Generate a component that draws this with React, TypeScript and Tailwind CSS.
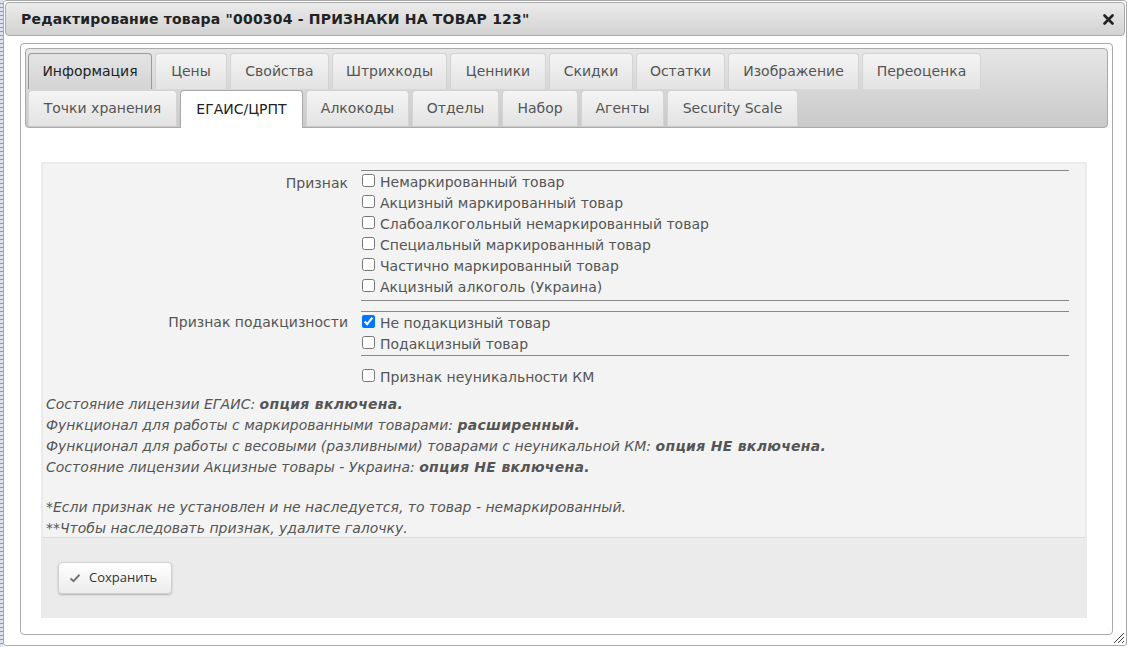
import React from "react";

const row1: [string, number][] = [
  ["Информация", 124],
  ["Цены", 72],
  ["Свойства", 99],
  ["Штрихкоды", 115],
  ["Ценники", 96],
  ["Скидки", 84],
  ["Остатки", 89],
  ["Изображение", 131],
  ["Переоценка", 119],
];
const row2: [string, number][] = [
  ["Точки хранения", 149],
  ["ЕГАИС/ЦРПТ", 123],
  ["Алкокоды", 103],
  ["Отделы", 87],
  ["Набор", 76],
  ["Агенты", 83],
  ["Security Scale", 131],
];

function Tab({ label, w, active, hover }: { label: string; w: number; active?: boolean; hover?: boolean }) {
  if (active) {
    return (
      <div
        className="relative z-10 mr-[3px] flex h-[38px] shrink-0 items-center justify-center rounded-t-[4px] border border-b-0 border-[#aaaaaa] bg-white text-[#222]"
        style={{ width: w }}
      >
        {label}
      </div>
    );
  }
  if (hover) {
    return (
      <div
        className="mr-[3px] flex h-[36px] shrink-0 items-center justify-center rounded-t-[4px] border border-b-0 border-[#9a9a9a] bg-gradient-to-b from-[#e4e4e4] to-[#d4d4d4] text-[#222]"
        style={{ width: w }}
      >
        {label}
      </div>
    );
  }
  return (
    <div
      className="mr-[3px] flex h-[36px] shrink-0 items-center justify-center rounded-t-[4px] border border-b-0 border-[#d3d3d3] bg-gradient-to-b from-[#f4f4f4] to-[#e3e3e3] text-[#555]"
      style={{ width: w }}
    >
      {label}
    </div>
  );
}

function Check({ label, checked }: { label: string; checked?: boolean }) {
  return (
    <label className="flex h-[21px] items-center">
      <input type="checkbox" defaultChecked={checked} className="m-0 ml-[1px] h-[13px] w-[13px] -translate-y-[2px] accent-[#0075ff]" />
      <span className="ml-[5px]">{label}</span>
    </label>
  );
}

export default function App() {
  return (
    <div
      className="flex h-[647px] w-[1128px] overflow-hidden bg-white text-[14px] text-[#555]"
      style={{ fontFamily: '"DejaVu Sans", Verdana, sans-serif' }}
    >
      <div className="w-[3px] shrink-0 bg-[repeating-linear-gradient(180deg,#d9e2ef_0px,#d9e2ef_3px,#7ea0d0_3px,#7ea0d0_4px)]" />
      <div className="relative flex h-[646px] w-[1124px] flex-col rounded-[3px] border border-[#aaaaaa] bg-white p-[1px]">
        {/* Title bar */}
        <div className="flex h-[34px] shrink-0 items-center justify-between rounded-[4px] border border-[#aaaaaa] bg-gradient-to-b from-[#ebebeb] to-[#d2d2d2] pl-[15px] pr-[10px]">
          <span className="text-[14px] font-bold tracking-[0.2px] text-[#222]">Редактирование товара "000304 - ПРИЗНАКИ НА ТОВАР 123"</span>
          <svg width="11" height="11" viewBox="0 0 11 11">
            <path d="M1.5 1.5 L9.5 9.5 M9.5 1.5 L1.5 9.5" stroke="#222" strokeWidth="2.6" strokeLinecap="round" />
          </svg>
        </div>

        {/* Content */}
        <div className="ml-[15px] mr-[12px] mt-[7px] flex h-[592px] flex-col rounded-[4px] border border-[#aaaaaa] p-[4px]">
          {/* Tabs */}
          <div className="rounded-[4px] border border-[#aaaaaa] bg-gradient-to-b from-[#e6e6e6] to-[#c9c9c9] px-[2px] pt-[4px]">
            <div className="flex">
              {row1.map(([t, w], i) => (
                <Tab key={t} label={t} w={w} hover={i === 0} />
              ))}
            </div>
            <div className="mt-[1px] flex h-[37px] items-start">
              {row2.map(([t, w]) => (
                <Tab key={t} label={t} w={w} active={t === "ЕГАИС/ЦРПТ"} />
              ))}
            </div>
          </div>

          {/* Form panel */}
          <div className="ml-[16px] mt-[34px] w-[1046px] border-2 border-[#ebebeb] bg-[#f3f3f3]">
            <div className="pt-[6px]">
              <div className="flex">
                <div className="w-[305px] pt-[3px] text-right leading-[21px]">Признак</div>
                <div className="ml-[13px] w-[708px] border-b border-t border-[#888] pb-[2px] pt-[1px]">
                  <Check label="Немаркированный товар" />
                  <Check label="Акцизный маркированный товар" />
                  <Check label="Слабоалкогольный немаркированный товар" />
                  <Check label="Специальный маркированный товар" />
                  <Check label="Частично маркированный товар" />
                  <Check label="Акцизный алкоголь (Украина)" />
                </div>
              </div>
              <div className="mt-[10px] flex">
                <div className="w-[305px] pt-[1px] text-right leading-[21px]">Признак подакцизности</div>
                <div className="ml-[13px] w-[708px] border-b border-t border-[#888] pt-[1px]">
                  <Check label="Не подакцизный товар" checked />
                  <Check label="Подакцизный товар" />
                </div>
              </div>
              <div className="mt-[11px] flex">
                <div className="w-[305px]" />
                <div className="ml-[13px] w-[708px]">
                  <Check label="Признак неуникальности КМ" />
                </div>
              </div>
              <div className="mt-[6px] pl-[3px] italic leading-[21px]">
                <div>
                  Состояние лицензии ЕГАИС: <b className="tracking-[0.3px]">опция включена.</b>
                </div>
                <div>
                  Функционал для работы с маркированными товарами: <b className="tracking-[0.3px]">расширенный.</b>
                </div>
                <div>
                  Функционал для работы с весовыми (разливными) товарами с неуникальной КМ:{" "}
                  <b className="tracking-[0.3px]">опция НЕ включена.</b>
                </div>
                <div>
                  Состояние лицензии Акцизные товары - Украина: <b className="tracking-[0.3px]">опция НЕ включена.</b>
                </div>
                <div className="h-[19px]" />
                <div>*Если признак не установлен и не наследуется, то товар - немаркированный.</div>
                <div>**Чтобы наследовать признак, удалите галочку.</div>
              </div>
            </div>
            <div className="relative -mt-[2px] h-[79px] border-t border-[#dddddd] bg-[#ebebeb] pl-[15px] pt-[24px]">
              <button
                className="flex h-[32px] w-[114px] items-center rounded-[4px] border border-[#d0d0d0] bg-gradient-to-b from-white to-[#ececec] pl-[10px] text-[13px] text-[#333] shadow-[0_1px_2px_rgba(0,0,0,0.25)]"
                style={{ fontFamily: '"Open Sans", "Noto Sans", sans-serif' }}
              >
                <svg width="12" height="10" viewBox="0 0 12 10" className="mr-[8px]">
                  <path d="M1.5 5.5 L4.5 8.2 L10.5 1.8" stroke="#777" strokeWidth="2" fill="none" />
                </svg>
                Сохранить
              </button>
            </div>
          </div>
        </div>

        {/* resize grip */}
        <svg className="absolute bottom-[1px] right-[1px]" width="13" height="13" viewBox="0 0 13 13">
          <path d="M12 2 L2 12 M12 6 L6 12 M12 10 L10 12" stroke="#444" strokeWidth="1" />
        </svg>
      </div>
    </div>
  );
}
